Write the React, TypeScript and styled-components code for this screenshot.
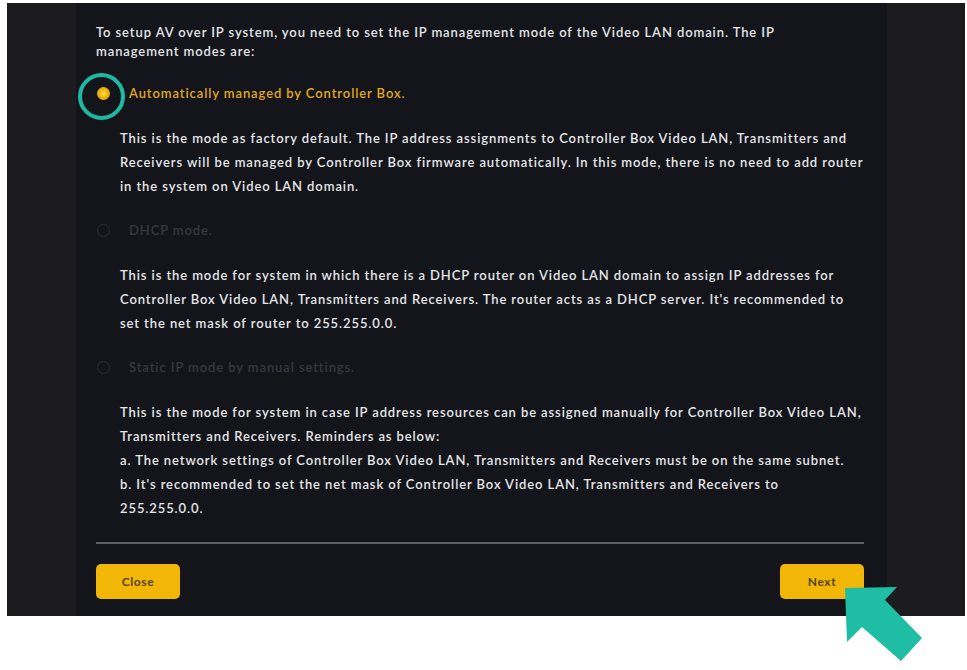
import React from 'react';
import styled, { createGlobalStyle } from 'styled-components';

const GlobalStyle = createGlobalStyle`
  body {
    margin: 0;
    background: #ffffff;
    font-family: Lato, "Noto Sans", sans-serif;
  }
`;

const Page = styled.div`
  position: relative;
  width: 967px;
  height: 670px;
  padding: 3px 2px 0 7px;
  box-sizing: border-box;
`;

const Frame = styled.div`
  display: flex;
  height: 613px;
  padding-left: 69px;
  background: #1c1c1f;
`;

const Panel = styled.div`
  display: flex;
  flex-direction: column;
  width: 811px;
  padding: 20px 23px 0 20px;
  box-sizing: border-box;
  background: #13151b;
`;

const Intro = styled.p`
  margin: 0 0 22px;
  font-size: 13px;
  line-height: 19px;
  font-weight: 600;
  letter-spacing: 0.9px;
  color: #e4e4e6;
`;

const Option = styled.div`
  display: flex;
  flex-direction: column;
`;

const OptionRow = styled.label`
  position: relative;
  display: flex;
  align-items: center;
  gap: 19px;
  height: 20px;
  padding-left: 1px;
`;

const Radio = styled.span<{ $checked?: boolean }>`
  position: relative;
  width: 13px;
  height: 13px;
  box-sizing: border-box;
  border-radius: 50%;
  border: ${(p) => (p.$checked ? '2px solid #e9ad0c' : '1.5px solid #2c2f37')};
  background: ${(p) =>
    p.$checked ? 'radial-gradient(circle, #ffe36a 0%, #f5c014 45%, #e9ad0c 100%)' : 'transparent'};
`;

const Highlight = styled.span`
  position: absolute;
  left: -21px;
  top: -16px;
  width: 47px;
  height: 47px;
  box-sizing: border-box;
  border-radius: 50%;
  border: 4px solid #1fb9a2;
`;

const OptionLabel = styled.span<{ $active?: boolean }>`
  font-size: 13px;
  font-weight: 600;
  letter-spacing: 0.9px;
  color: ${(p) => (p.$active ? '#e2a91c' : '#363941')};
`;

const Description = styled.p`
  margin: 23px 0 22px;
  padding-left: 24px;
  font-size: 13px;
  line-height: 24px;
  font-weight: 600;
  letter-spacing: 0.9px;
  color: #e6e6e8;
  white-space: nowrap;
`;

const Divider = styled.hr`
  margin: 0;
  height: 2px;
  border: none;
  background: #5c5f66;
`;

const Footer = styled.div`
  display: flex;
  justify-content: space-between;
  margin-top: 20px;
`;

const Button = styled.button`
  width: 84px;
  height: 35px;
  border: none;
  border-radius: 5px;
  background: #f2b606;
  color: #57430a;
  font-family: Lato, "Noto Sans", sans-serif;
  font-size: 12px;
  font-weight: 700;
  letter-spacing: 0.6px;
  cursor: pointer;
`;

const Arrow = styled.svg`
  position: absolute;
  left: 840px;
  top: 583px;
`;

const App: React.FC = () => {
  return (
    <Page>
      <GlobalStyle />
      <Frame>
        <Panel>
          <Intro>
            To setup AV over IP system, you need to set the IP management mode of the Video LAN domain. The IP
            <br />
            management modes are:
          </Intro>

          <Option>
            <OptionRow>
              <Radio $checked>
                <Highlight />
              </Radio>
              <OptionLabel $active>Automatically managed by Controller Box.</OptionLabel>
            </OptionRow>
            <Description>
              This is the mode as factory default. The IP address assignments to Controller Box Video LAN, Transmitters and
              <br />
              Receivers will be managed by Controller Box firmware automatically. In this mode, there is no need to add router
              <br />
              in the system on Video LAN domain.
            </Description>
          </Option>

          <Option>
            <OptionRow>
              <Radio />
              <OptionLabel>DHCP mode.</OptionLabel>
            </OptionRow>
            <Description>
              This is the mode for system in which there is a DHCP router on Video LAN domain to assign IP addresses for
              <br />
              Controller Box Video LAN, Transmitters and Receivers. The router acts as a DHCP server. It's recommended to
              <br />
              set the net mask of router to 255.255.0.0.
            </Description>
          </Option>

          <Option>
            <OptionRow>
              <Radio />
              <OptionLabel>Static IP mode by manual settings.</OptionLabel>
            </OptionRow>
            <Description>
              This is the mode for system in case IP address resources can be assigned manually for Controller Box Video LAN,
              <br />
              Transmitters and Receivers. Reminders as below:
              <br />
              a. The network settings of Controller Box Video LAN, Transmitters and Receivers must be on the same subnet.
              <br />
              b. It's recommended to set the net mask of Controller Box Video LAN, Transmitters and Receivers to
              <br />
              255.255.0.0.
            </Description>
          </Option>

          <Divider />
          <Footer>
            <Button>Close</Button>
            <Button>Next</Button>
          </Footer>
        </Panel>
      </Frame>

      <Arrow width="90" height="85" viewBox="0 0 90 85">
        <polygon points="5,5 57,4 45,17 82,55 61,78 22,44 7,59" fill="#1fbda3" />
      </Arrow>
    </Page>
  );
};

export default App;
